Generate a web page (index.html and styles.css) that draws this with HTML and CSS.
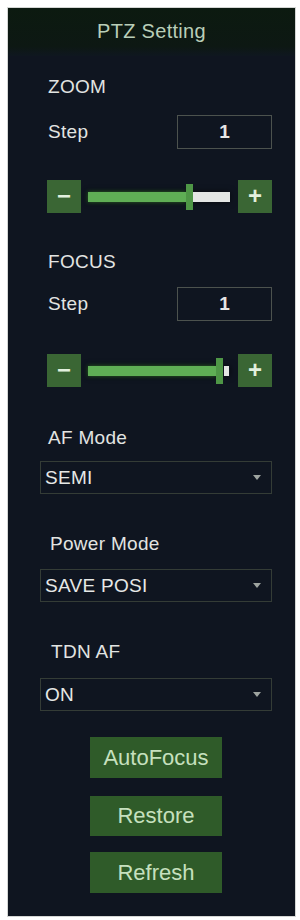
FILE: index.html
```html
<!DOCTYPE html>
<html lang="en">
<head>
    <meta charset="UTF-8">
    <meta name="viewport" content="width=device-width, initial-scale=1.0">
    <title>PTZ Setting</title>
    <link rel="stylesheet" href="styles.css">
</head>
<body>
    <div class="panel">
        <div class="header">PTZ Setting</div>
        <div class="content">
            <div class="label label-zoom">ZOOM</div>
            <div class="step-row step-zoom">
                <span class="step-label">Step</span>
                <div class="step-box">1</div>
            </div>
            <div class="slider slider-zoom">
                <div class="slider-btn">&minus;</div>
                <div class="track">
                    <div class="fill" style="width: 98px"></div>
                    <div class="thumb" style="left: 98px"></div>
                </div>
                <div class="slider-btn">+</div>
            </div>

            <div class="label label-focus">FOCUS</div>
            <div class="step-row step-focus">
                <span class="step-label">Step</span>
                <div class="step-box">1</div>
            </div>
            <div class="slider slider-focus">
                <div class="slider-btn">&minus;</div>
                <div class="track">
                    <div class="fill" style="width: 128px"></div>
                    <div class="thumb" style="left: 128px"></div>
                </div>
                <div class="slider-btn">+</div>
            </div>

            <div class="label label-af">AF Mode</div>
            <div class="select select-af">
                <span>SEMI</span>
                <span class="arrow"></span>
            </div>

            <div class="label label-power">Power Mode</div>
            <div class="select select-power">
                <span>SAVE POSI</span>
                <span class="arrow"></span>
            </div>

            <div class="label label-tdn">TDN AF</div>
            <div class="select select-tdn">
                <span>ON</span>
                <span class="arrow"></span>
            </div>

            <div class="buttons">
                <button class="btn btn-af">AutoFocus</button>
                <button class="btn btn-restore">Restore</button>
                <button class="btn btn-refresh">Refresh</button>
            </div>
        </div>
    </div>
</body>
</html>
```

FILE: styles.css
```css
body {
    margin: 0;
    padding: 7px 3px 3px 7px;
    background-color: #fff;
    font-family: "Liberation Sans", Arial, sans-serif;
}
.panel {
    width: 289px;
    height: 910px;
    background-color: #0f1520;
    border: 1px solid #d4d6d4;
    box-sizing: border-box;
    display: flex;
    flex-direction: column;
}
.header {
    height: 48px;
    line-height: 46px;
    text-align: center;
    color: #b9ceb8;
    font-size: 20px;
    letter-spacing: 0.3px;
    background: linear-gradient(#0c1a10, #0d1813 80%, #0f1720);
}
.content {
    padding: 0 23px 0 32px;
    display: flex;
    flex-direction: column;
}
.label {
    color: #e2e4e2;
    font-size: 19px;
    line-height: 24px;
    padding-left: 8px;
    letter-spacing: 0.3px;
}
.label-zoom { margin-top: 19px; }
.label-focus { margin-top: 37px; }
.label-af { margin-top: 39px; }
.label-power { margin-top: 38px; padding-left: 10px; }
.label-tdn { margin-top: 38px; padding-left: 11px; }

.step-row {
    display: flex;
    justify-content: space-between;
    align-items: center;
    padding-left: 8px;
}
.step-zoom { margin-top: 16px; }
.step-focus { margin-top: 13px; }
.step-label {
    color: #e2e4e2;
    font-size: 19px;
    letter-spacing: 0.3px;
}
.step-box {
    width: 95px;
    height: 34px;
    box-sizing: border-box;
    border: 1px solid #4c524e;
    color: #e6e6e6;
    font-size: 19px;
    font-weight: bold;
    line-height: 32px;
    text-align: center;
}

.slider {
    display: flex;
    align-items: center;
    margin-left: 7px;
    height: 33px;
}
.slider-zoom { margin-top: 31px; }
.slider-focus { margin-top: 33px; }
.slider-btn {
    width: 34px;
    height: 33px;
    background-color: #3a6634;
    color: #e2f0de;
    font-size: 24px;
    font-weight: bold;
    line-height: 31px;
    text-align: center;
}
.track {
    position: relative;
    width: 143px;
    height: 10px;
    margin: 0 8px 0 7px;
    background-color: #e4e6e4;
    box-shadow: 0 0 6px rgba(0, 0, 0, 0.6);
}
.slider-focus .track {
    background: linear-gradient(to right, transparent 136px, #e4e6e4 136px, #e4e6e4 141px, transparent 141px);
}
.fill {
    height: 100%;
    background-color: #5fae55;
    box-shadow: 0 0 4px #2e6a28;
}
.thumb {
    position: absolute;
    top: -8px;
    width: 7px;
    height: 26px;
    background-color: #4e9646;
}

.select {
    height: 33px;
    box-sizing: border-box;
    border: 1px solid #343c36;
    display: flex;
    justify-content: space-between;
    align-items: center;
    padding: 0 10px 0 4px;
    color: #e6e8e6;
    font-size: 19px;
    letter-spacing: 0.3px;
}
.select-af { margin-top: 11px; }
.select-power { margin-top: 13px; }
.select-tdn { margin-top: 14px; }
.arrow {
    width: 0;
    height: 0;
    border-left: 4px solid transparent;
    border-right: 4px solid transparent;
    border-top: 5px solid #9ea4a0;
}

.buttons {
    display: flex;
    flex-direction: column;
    align-items: center;
    margin-top: 26px;
}
.btn {
    width: 132px;
    height: 41px;
    border: none;
    background-color: #2f5b29;
    color: #c6e0be;
    font-family: "Liberation Sans", Arial, sans-serif;
    font-size: 22px;
    padding: 0;
}
.btn-restore { margin-top: 18px; height: 40px; }
.btn-refresh { margin-top: 16px; }
```
